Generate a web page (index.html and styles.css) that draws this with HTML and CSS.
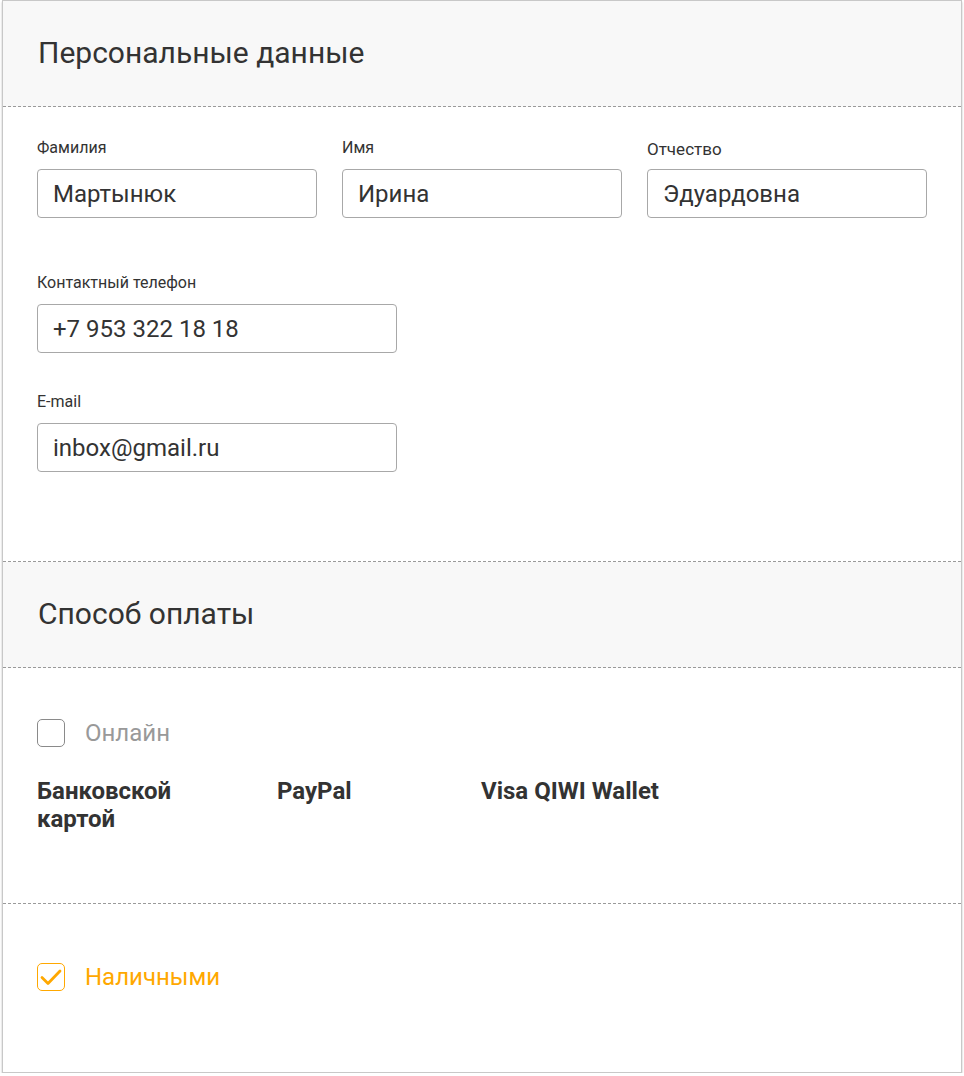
FILE: index.html
```html
<!DOCTYPE html>
<html lang="ru">
<head>
<meta charset="utf-8">
<link rel="stylesheet" href="styles.css">
</head>
<body>
<div class="card">
  <div class="section-head"><h2>Персональные данные</h2></div>
  <div class="section-body personal">
    <div class="row three">
      <div class="field"><label>Фамилия</label><div class="input">Мартынюк</div></div>
      <div class="field"><label>Имя</label><div class="input">Ирина</div></div>
      <div class="field"><label class="big">Отчество</label><div class="input">Эдуардовна</div></div>
    </div>
    <div class="field wide phone"><label>Контактный телефон</label><div class="input">+7 953 322 18 18</div></div>
    <div class="field wide email"><label>E-mail</label><div class="input">inbox@gmail.ru</div></div>
  </div>
  <div class="section-head"><h2>Способ оплаты</h2></div>
  <div class="section-body online">
    <div class="check"><span class="box"></span><span class="check-label">Онлайн</span></div>
    <div class="methods">
      <div class="method">Банковской картой</div>
      <div class="method">PayPal</div>
      <div class="method">Visa QIWI Wallet</div>
    </div>
  </div>
  <div class="section-body cash">
    <div class="check checked"><span class="box"><svg viewBox="0 0 28 28" width="28" height="28"><path d="M5 14.5 L11 20.5 L23 8" fill="none" stroke="#ffa800" stroke-width="2.8" stroke-linecap="round" stroke-linejoin="round"/></svg></span><span class="check-label">Наличными</span></div>
  </div>
</div>
</body>
</html>
```

FILE: styles.css
```css
* { box-sizing: border-box; }
html, body { margin: 0; padding: 0; background: #fff; }
body { font-family: Roboto, "Noto Sans", sans-serif; color: #333; padding: 0 2px 0 2px; }
.card {
  width: 960px;
  border: 1px solid #c8c8c8;
  box-shadow: 0 2px 2px rgba(0,0,0,0.25);
  background: #fff;
}
.section-head {
  background: #f8f8f8;
  height: 106px;
  display: flex;
  align-items: center;
  padding-left: 35px;
  border-bottom: 1px dashed #9a9a9a;
}
.section-head h2 {
  margin: 0;
  font-size: 30px;
  font-weight: 400;
  color: #333;
  line-height: 1;
  padding-bottom: 2px;
}
.section-body { padding-left: 34px; }
.personal { padding-top: 32px; padding-bottom: 89px; border-bottom: 1px dashed #9a9a9a; }
.row.three { display: flex; gap: 25px; }
.field label {
  display: block;
  font-size: 16px;
  line-height: 18px;
  color: #333;
  margin-bottom: 12px;
}
.field label.big { font-size: 17px; line-height: 20px; margin-bottom: 10px; }
.field .input {
  width: 280px;
  height: 49px;
  border: 1px solid #a8a8a8;
  border-radius: 4px;
  padding-left: 15px;
  padding-top: 2px;
  font-size: 24px;
  line-height: 45px;
  color: #333;
}
.field.wide .input { width: 360px; }
.phone { margin-top: 56px; }
.email { margin-top: 40px; }
.online { padding-top: 51px; padding-bottom: 70px; border-bottom: 1px dashed #9a9a9a; }
.check { display: flex; align-items: center; gap: 20px; }
.box {
  width: 28px;
  height: 28px;
  border: 1.5px solid #8a8a8a;
  border-radius: 5px;
  display: block;
  position: relative;
}
.box svg { position: absolute; left: -1.5px; top: -1.5px; }
.check-label { font-size: 24px; color: #999; line-height: 28px; }
.checked .box { border-color: #ffa800; }
.checked .check-label { color: #ffa800; }
.methods { display: grid; grid-template-columns: 240px 204px auto; margin-top: 30px; }
.method {
  font-size: 24px;
  font-weight: 700;
  line-height: 28px;
  color: #333;
  width: 170px;
}
.method:last-child { width: auto; }
.cash { padding-top: 59px; padding-bottom: 81px; }
```
